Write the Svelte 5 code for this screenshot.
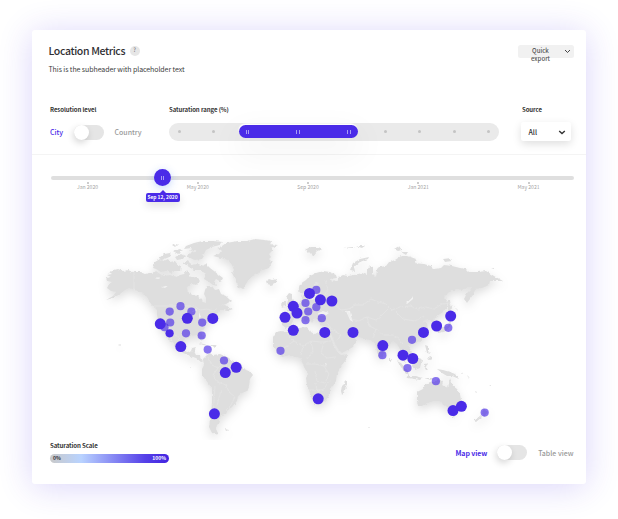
<script>
  const stops = Array.from({ length: 10 }, (_, i) => i);
  const months = ['Jan 2020', 'May 2020', 'Sep 2020', 'Jan 2021', 'May 2021'];

  const land = [
    // North America
    'M107 275L112 274 109 272 114 270 118 269 123 271 128 270 133 272 140 272 145 274 149 273 152 274 156 271 160 274 164 276 170 275 176 277 180 275 184 274 187 270 190 274 189 278 193 277 196 281 192 284 188 287 187 291 191 294 198 296 202 299 203 302 206 303 206 298 204 294 205 290 207 286 212 286 215 290 219 289 221 294 226 296 229 299 231 301 226 304 219 306 225 305 229 308 233 309 227 311 222 310 216 314 213 317 209 320 206 324 204 328 201 332 203 337 202 341 199 338 197 335 191 336 188 337 184 340 183 344 184 350 188 353 191 351 192 348 196 347 194 351 196 355 200 355 201 360 204 361 201 362 196 358 190 356 183 353 177 349 173 342 170 336 168 334 171 341 170 342 166 335 162 329 159 323 157 315 157 310 154 307 151 304 147 297 142 292 135 290 129 288 125 290 120 294 113 298 106 300 113 296 116 292 111 291 107 288 109 284 112 282 107 281 106 278 111 277z',
    // Arctic islands
    'M153 268l2-6 5-3 4 2 4-2 2 3 5-1 3 4 3 1-1 5-5 0-4 2-5-2-5 1-5-3zM159 258l5-4 6-1 2 3-5 2-5 2zM173 251l7-2 3 2-5 3zM175 257l6-3 4 2-2 3-6 1zM187 255l5-3 8 1 4 3-2 3-7 1-6-2zM183 263l5-3 3 5 5-1 5 2 5-2 4 4 4 3 5 4 4 3-2 4-5-3-2 3 4 4-5-1-4-3-5-3 2-5-6-4-6 0-5-3zM186 246l8-3 4-1 5-1 10 0 10 1-3 3-8 2-6 3-2 4-7 1-3-2 2-3-7 1 3-3-8 1zM190 278l6-1 4 4-4 4-6-2zM172 245l6-1-3 3z',
    // Greenland and Iceland
    'M213 256L219 254 221 251 217 248 222 246 226 243 232 242 238 241 247 241 255 239 265 240 271 241 270 244 278 245 272 248 272 251 269 254 271 257 269 259 272 262 269 268 263 270 259 273 253 276 249 279 246 284 243 289 239 287 236 282 234 277 232 273 234 270 232 265 228 260 221 258zM266 281l3-2 3 1 5-1-1 4-5 2-4-1z',
    // South America
    'M203 359L207 355 210 353 213 355 220 354 225 356 229 358 233 362 240 364 244 369 250 371 253 375 250 379 249 386 247 391 242 393 238 396 237 401 232 407 227 411 226 415 221 416 219 420 220 422 217 425 216 429 218 433 217 435 212 433 209 427 210 420 211 413 212 403 212 388 208 383 205 379 202 374 202 369 204 365zM225 429l4 1-3 1z',
    // Africa and Madagascar
    'M281 331l8 1 9-4 9-1 2 4 6 3 5-3 9 1 2 7 3 7 4 7 2 2 8-1-2 6-5 6-4 7-1 8-3 5-3 2 0 6-4 6-5 4-6 1-2-4-3-8-3-8-1-7 2-4-4-7-2-5-1-4-6-1-5-2-8 2-5-6-4-6 0-8 3-5zM341 391l1-6 3-3 2-2 0 4-3 9-2 2z',
    // Eurasia
    'M282 325L281 317 289 316 291 312 287 309 294 307 299 304 301 300 303 295 306 294 308 298 312 300 319 297 320 293 317 291 315 288 319 283 316 282 313 289 311 295 308 297 305 292 301 294 298 290 300 284 306 280 310 276 316 273 323 271 330 272 336 275 337 278 330 279 331 282 337 281 339 277 343 275 348 276 354 275 362 273 367 275 367 270 370 266 373 267 373 274 376 277 377 270 380 267 386 266 389 262 395 260 401 256 408 256 416 259 414 263 424 264 431 266 434 269 441 268 444 265 452 266 460 268 466 269 469 272 478 272 486 271 494 276 503 281 495 281 490 281 489 285 482 288 475 289 473 295 467 303 464 299 467 293 473 287 468 287 464 290 456 289 449 292 444 297 448 302 447 308 443 312 437 316 433 319 437 322 435 326 432 321 427 319 422 322 427 323 428 329 426 336 419 342 412 344 408 346 412 352 408 358 403 353 403 357 407 364 401 358 401 351 397 344 393 341 389 345 384 349 383 357 380 360 377 352 376 346 373 341 365 339 356 336 348 329 348 333 354 337 357 341 353 347 342 353 338 349 334 341 331 334 330 327 320 325 318 320 315 318 312 323 308 315 305 313 309 319 306 322 301 315 295 317 291 325 286 328z',
    // British Isles
    'M286 311l3-3-2-4 1-4-2-3 3-4 3 1-1 3 3 5 2 4-3 4zM281 305l1-4 4 0 0 5-4 1z',
    // Russian Arctic islands
    'M350 270l3-7 7-4 9-2-1 2-8 3-6 5 1 4zM305 249l6-2 8 0 3 3-5 1-4 5-4-4zM343 248l10-1 2 1zM356 246l9 0-3 2zM394 249l5-3 3 4-4 1zM401 252l7 0-2 3zM443 259l8-1 1 3-7 1zM454 260l5 1zM491 269l3-1 1 1z',
    // Japan, Sakhalin
    'M448 300l2 0 1 7-1 6-2-3zM447 318l4-3 3 1-4 4zM437 330l6-3 4-1 3-5 1 2-2 6-5 3-6 1z',
    // South-east Asia
    'M397 361l4 2 7 8 1 5-4-3zM407 376l9 0 6 2-2 2-12-2zM413 361l6-4 3 3-2 8-5 2-3-4zM424 364l5-1-3 3 2 5-2-1-2-3zM425 345l3 1 0 5 3 3-4-1zM428 357l3-1 1 3-3 1zM437 369l6 1 7 2 5 2 4 5-7-3-5 0-5-3zM424 378l10 0-3 2zM428 372l1 0zM419 345l1 3zM389 358l2 3-2 1z',
    // Australia, Tasmania, New Zealand
    'M417 392l6-3 2-4 5-3 4 0 4-3 5 2-1 4 6 3 2-10 3 8 4 3 3 5 1 6-2 5-4 5-5 1-2-4-5-2-2-4-7 0-7 2-5 3-4 0-1-5zM452 415l3 0-1 3zM484 407l2 4 2 1-4 5-2-3zM481 415l1 2-6 5-2-1z',
    // Caribbean and scattered islands
    'M198 343l6 1 5 2-6-1zM211 345l6 0-3 2zM118 344l2 1-1 1zM190 366l1 0 0 1zM251 434l1 0 0 1zM460 372l3 1-1 1zM467 375l3 3-2-1zM475 391l2 1-1 1zM489 386l2-1 0 1zM368 427l2 0-1 1z'
  ].join('');

  const borders =
    'M134 271v19l5 3 5 7M154 306h40l6 4 8-1 5 2 5-3M161 330l12 1 6 8M207 357l5 8 6 3-5 7 4 7 9 3 3 7 6 5-4 8-5 5M218 368l7-6 2 6 8-2M215 386l-1 14-1 20M221 390l-4 16M286 333l8 8-10 7M294 341l9 5 8-5 10 1 10-1M303 346l-2 9M311 341l2 10-6 8M324 342l-3 11 6 5 9-1M306 364l9 0 9 2 5 8-4 9-8-2-2-10M316 383l1 8 7-2 5-8M309 390h11M301 303l5 5 5-4 8 2 5-5 8 3M325 280l3 9-4 7M335 305l6 5 8-1 6-4 8 0 8-6 7 3 8 2 6 6 8-3 10-1 8 3 8-2 8 2 8-5 8-1 8 8M347 310l4 9 8 2 8-4 9 3 6-5 6-6M367 317l2 9 7 3-3 9M376 329l8 6 9 0 5 3 5 6M396 312l7 7 12 2 9-5M327 322l5 8 9 5-4 6';

  const lakes =
    'M154 278l6-1-2 2zM162 287l7-2-4 3zM406 303l6-5 1-2 0 3-6 5zM192 311l4-2 2 2-5 1zM199 312l2 5-2 1zM204 315l5-2zM318 313l6-2 5 2-4 3-6 0zM346 311l4 0 1 5 2 6-3-2zM325 363l2 1-1 3z';

  const big = [
    [160.3, 323.8], [187.3, 318.3], [212.8, 318.4], [180.8, 346.6], [225.3, 372.6], [236.2, 367.3],
    [214.4, 413.8], [309.5, 293.4], [320.4, 299.8], [331.9, 301], [293.3, 306.3], [297, 313],
    [285, 317.3], [293.3, 330.3], [324.8, 332.4], [353, 332.4], [318.2, 398.8], [382.8, 345.6],
    [403, 355.2], [412.8, 358.5], [423.5, 332.4], [436.6, 326], [450.7, 316.1], [453, 410.6], [461.4, 406.3]
  ];
  const small = [
    [180.5, 306.2], [169.7, 311.6], [191.4, 311.6], [170.2, 322.5], [164.5, 327.2], [202.2, 322.6],
    [186, 333.3], [201.7, 335.5], [207.7, 349.6], [224, 360.5], [280.5, 350.8], [316.3, 289.9],
    [305.5, 303], [316.3, 307.2], [308.2, 311.5], [305.5, 320.2], [321.8, 318.2], [382.4, 355.2],
    [412, 339.8], [448.3, 327.8], [407.5, 368.1], [435.9, 381.2], [484.7, 412.6]
  ];
</script>

<main class="page">
  <section class="card">
    <header>
      <div class="heading">
        <h1>Location Metrics <i class="help">?</i></h1>
        <p>This is the subheader with placeholder text</p>
      </div>
      <button class="export">
        <span>Quick export</span>
        <svg width="7" height="5" viewBox="0 0 7 5"><path d="M1 1l2.5 2.5L6 1" /></svg>
      </button>
    </header>

    <div class="controls">
      <div class="resolution">
        <b>Resolution level</b>
        <div class="switch-row">
          <span class="on">City</span>
          <span class="switch"><i></i></span>
          <span class="off">Country</span>
        </div>
      </div>
      <div class="saturation">
        <b>Saturation range (%)</b>
        <div class="range">
          {#each stops as s (s)}<i class="stop"></i>{/each}
          <div class="selected"><i class="grip"></i><i class="grip"></i><i class="grip"></i></div>
        </div>
      </div>
      <div class="source">
        <b>Source</b>
        <div class="select">
          <span>All</span>
          <svg width="8" height="5" viewBox="0 0 8 5"><path d="M1.2 .9l2.8 2.6 2.8-2.6" /></svg>
        </div>
      </div>
    </div>

    <div class="timeline">
      <div class="track"></div>
      <div class="months">
        {#each months as m (m)}<span>{m}</span>{/each}
      </div>
      <div class="knob"><i class="grip"></i></div>
      <div class="tip">Sep 12, 2020</div>
    </div>

    <svg class="map" width="554" height="220" viewBox="32 220 554 220">
      <defs>
        <filter id="coast" x="-5%" y="-5%" width="110%" height="115%">
          <feTurbulence type="fractalNoise" baseFrequency="0.3" numOctaves="2" seed="4" result="n" />
          <feDisplacementMap in="SourceGraphic" in2="n" scale="3" xChannelSelector="R" yChannelSelector="G" />
        </filter>
      </defs>
      <g class="world">
        <g filter="url(#coast)">
          <path class="land" d={land} />
          <path class="lakes" d={lakes} />
          <path class="borders" d={borders} />
        </g>
      </g>
      <g class="small">
        {#each small as [x, y]}<circle cx={x} cy={y} r="4.1" />{/each}
      </g>
      <g class="big">
        {#each big as [x, y]}<circle cx={x} cy={y} r="5.5" />{/each}
        <circle cx="169.6" cy="333.3" r="4.1" />
      </g>
    </svg>

    <footer>
      <div class="scale">
        <b>Saturation Scale</b>
        <div class="gradient"><span>0%</span><span>100%</span></div>
      </div>
      <div class="view">
        <span class="on">Map view</span>
        <span class="switch"><i></i></span>
        <span class="off">Table view</span>
      </div>
    </footer>
  </section>
</main>

<style>
  :global(body) { background: #fff; }
  .page {
    box-sizing: border-box;
    width: 618px;
    height: 519px;
    padding: 30px 32px;
    overflow: hidden;
    font-family: "Noto Sans CJK SC", "Noto Sans", sans-serif;
    color: #2f2f33;
    font-size: 7px;
    line-height: 10px;
    white-space: nowrap;
  }
  .card {
    width: 554px;
    height: 454px;
    background: #fff;
    border-radius: 3px;
    box-shadow: 0 3px 34px rgba(72, 40, 232, 0.2);
  }
  header {
    display: flex;
    justify-content: space-between;
    box-sizing: border-box;
    height: 73px;
    padding: 13.5px 12.5px 0 16.5px;
  }
  h1 {
    display: flex;
    align-items: center;
    gap: 4.5px;
    margin: 0;
    font-size: 10.5px;
    font-weight: 500;
    line-height: 14px;
    letter-spacing: -0.36px;
  }
  .help {
    width: 10px;
    height: 10px;
    border-radius: 50%;
    background: #e6e6e6;
    color: #777;
    font-size: 5.5px;
    font-style: normal;
    letter-spacing: 0;
    line-height: 9.5px;
    text-align: center;
  }
  p { margin: 6px 0 0; font-size: 7px; line-height: 10px; letter-spacing: -0.08px; color: #3c3c3c; }
  .export {
    display: flex;
    align-items: flex-start;
    box-sizing: border-box;
    width: 55.5px;
    height: 12.5px;
    margin-top: 1.5px;
    padding: 2px 3px 0 12px;
    border: 0;
    border-radius: 2.5px;
    background: #f1f1f1;
    font: 500 6.1px/8px "Noto Sans CJK SC", sans-serif;
    color: #555;
  }
  .export span { width: 21px; white-space: normal; text-align: center; }
  .export svg { margin: 2px 0 0 auto; }
  svg path { fill: none; stroke: #333; stroke-width: 0.9; }
  .select svg path { stroke-width: 1.4; }
  b { display: block; font-size: 6px; font-weight: 700; line-height: 8px; letter-spacing: -0.07px; color: #333; }

  .controls {
    display: flex;
    box-sizing: border-box;
    height: 51px;
    padding: 3px 0 0 18px;
  }
  .resolution { width: 119px; }
  .switch-row { display: flex; align-items: center; margin-top: 10px; height: 16px; }
  .switch-row .on { width: 24px; }
  .switch-row .off { margin-left: 10.5px; }
  .on { color: #4a2be8; font-weight: 500; }
  .off { color: #999; font-weight: 500; }
  .switch { width: 30px; height: 15px; border-radius: 8px; background: #e5e5e5; }
  .switch i {
    display: block;
    width: 15px;
    height: 15px;
    border-radius: 50%;
    background: #fff;
    box-shadow: -1px 3px 7px rgba(0, 0, 0, 0.16);
  }
  .saturation { width: 352px; }
  .range {
    position: relative;
    display: flex;
    align-items: center;
    justify-content: space-between;
    box-sizing: border-box;
    width: 330px;
    height: 18.5px;
    margin-top: 8.5px;
    padding: 0 9px;
    border-radius: 10px;
    background: #eaeaea;
  }
  .stop { width: 3px; height: 3px; border-radius: 50%; background: #c4c4c4; }
  .selected {
    position: absolute;
    left: 69.5px;
    top: 2.5px;
    display: flex;
    align-items: center;
    justify-content: space-between;
    box-sizing: border-box;
    width: 119px;
    height: 13px;
    padding: 0 7px;
    border-radius: 7px;
    background: #4a2be8;
    box-shadow: -0.5px -1.5px 1px #fff, 0 12px 32px 6px rgba(0, 0, 0, 0.045);
  }
  .grip { width: 1.5px; height: 4px; border: solid #a99cf4; border-width: 0 1px; }
  .source { width: 52px; }
  .source b { padding-left: 1px; }
  .select {
    display: flex;
    align-items: center;
    justify-content: space-between;
    box-sizing: border-box;
    width: 50px;
    height: 19px;
    margin-top: 8px;
    padding: 1px 5px 0 7.5px;
    border-radius: 2.5px;
    background: #fff;
    box-shadow: 0 3px 9px rgba(0, 0, 0, 0.13);
    font-weight: 500;
  }

  .timeline {
    position: relative;
    box-sizing: border-box;
    height: 66px;
    padding: 20.5px 12.5px 0 18.5px;
    border-top: 1px solid rgba(0, 0, 0, 0.045);
  }
  .track { height: 4px; border-radius: 2px; background: #dfdfdf; }
  .months {
    display: flex;
    justify-content: space-between;
    padding: 2px 23px 0 15px;
  }
  .months span {
    display: flex;
    flex-direction: column;
    align-items: center;
    width: 44px;
    font-size: 5.1px;
    line-height: 6px;
    color: #a4a4a4;
  }
  .months span::before { content: ''; width: 2px; height: 2px; border-radius: 50%; background: #bbb; }
  .knob {
    position: absolute;
    left: 122px;
    top: 14px;
    display: flex;
    align-items: center;
    justify-content: center;
    width: 17px;
    height: 17px;
    border-radius: 50%;
    background: #4a2be8;
    box-shadow: 0 2px 8px rgba(60, 120, 240, 0.3);
  }
  .tip {
    position: absolute;
    left: 113.5px;
    top: 38px;
    width: 34px;
    height: 8.5px;
    border-radius: 2px;
    background: #4a2be8;
    box-shadow: 0 4px 9px rgba(0, 0, 0, 0.12);
    color: #fff;
    font-size: 4.9px;
    font-weight: 700;
    line-height: 8.5px;
    text-align: center;
  }
  .tip::before {
    content: '';
    position: absolute;
    left: 13px;
    top: -3px;
    border: solid transparent;
    border-width: 0 4px 4px;
    border-bottom-color: #4a2be8;
  }

  .map { display: block; }
  .world { filter: drop-shadow(0 4px 5px rgba(0, 0, 0, 0.13)); }
  .map .land { fill: #dedede; stroke: none; }
  .map .lakes { fill: #f2f2f2; stroke: none; }
  .map .borders { stroke: #e8e8e8; stroke-width: 0.5; }
  .big { fill: #4a2be8; }
  .small { fill: #4a2be8; fill-opacity: 0.65; }

  footer {
    display: flex;
    justify-content: space-between;
    padding: 1.5px 12.5px 0 18px;
  }
  .gradient {
    display: flex;
    justify-content: space-between;
    box-sizing: border-box;
    width: 119px;
    height: 9px;
    margin-top: 4.5px;
    padding: 0 3px;
    border-radius: 5px;
    background: linear-gradient(90deg, #c9c9c9 0%, #b9d3ff 26%, #5540e8 80%, #4223e0 100%);
    font-size: 5px;
    font-weight: 700;
    line-height: 7px;
  }
  .scale b { font-size: 6.1px; letter-spacing: -0.1px; }
  .gradient span:last-child { color: #fff; }
  .view { display: flex; align-items: center; height: 15px; margin-top: 3.5px; }
  .view .on { font-weight: 700; letter-spacing: -0.1px; }
  .view .switch { margin: 0 11px 0 10px; }
</style>
